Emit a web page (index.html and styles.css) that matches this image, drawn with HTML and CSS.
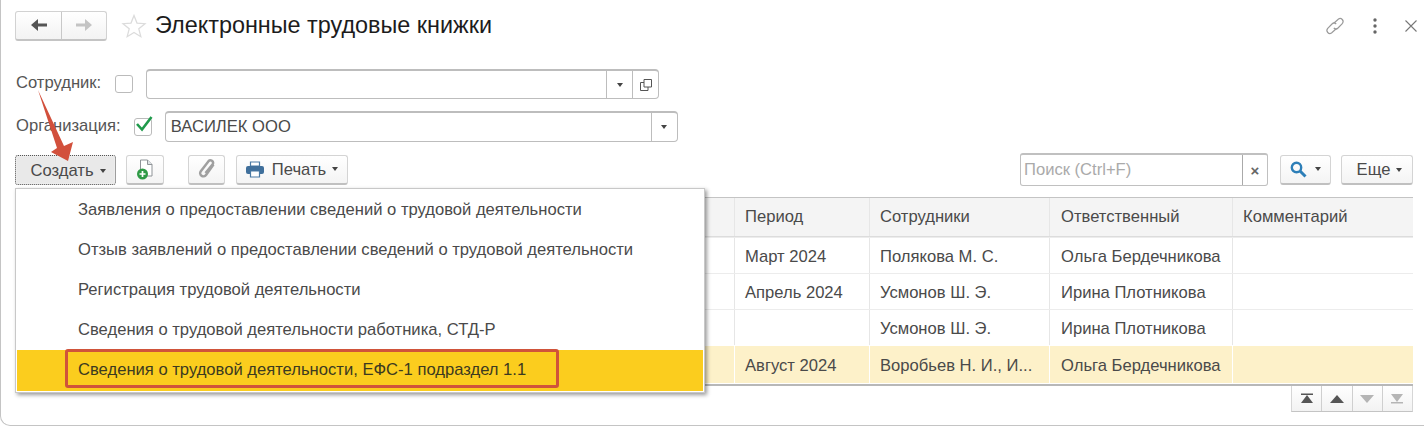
FILE: index.html
```html
<!DOCTYPE html>
<html lang="ru">
<head>
<meta charset="utf-8">
<title>Электронные трудовые книжки</title>
<link rel="stylesheet" href="styles.css">
</head>
<body>
<div class="window">
  <header class="head">
    <div class="nav">
      <span class="nav-btn nav-back"><svg width="18" height="14" viewBox="0 0 18 14"><path d="M17 5.500H8V1L1 7l7 6V8.500h9z" fill="#555"/></svg></span>
      <span class="nav-btn nav-fwd"><svg width="18" height="14" viewBox="0 0 18 14"><path d="M1 5.500h9V1l7 6-7 6V8.500H1z" fill="#c4c4c4"/></svg></span>
    </div>
    <svg class="star" width="26" height="26" viewBox="0 0 26 26"><path d="M13 2.500l3 7.600 8 .6-6.200 5.100 2 7.900L13 19.400 6.200 23.700l2-7.900L2 10.700l8-.6z" fill="#fff" stroke="#dcdcdc" stroke-width="1.300"/></svg>
    <h1 class="title">Электронные трудовые книжки</h1>
    <div class="head-icons">
      <svg width="20" height="22" viewBox="0 0 20 22"><g fill="none" stroke="#9a9a9a" stroke-width="1.200"><path d="M8.500 8.500l5-4.500a3 3 0 0 1 4 4.300l-4.500 4.700a3 3 0 0 1-4.200 0"/><path d="M11.500 13.500l-5 4.500a3 3 0 0 1-4-4.300L7 9a3 3 0 0 1 4.200 0"/></g></svg>
      <svg width="6" height="18" viewBox="0 0 6 18"><circle cx="3" cy="3" r="1.700" fill="#666"/><circle cx="3" cy="9" r="1.700" fill="#666"/><circle cx="3" cy="15" r="1.700" fill="#666"/></svg>
      <svg width="12" height="12" viewBox="0 0 12 12"><path d="M.5.500l11 11M11.500.500l-11 11" stroke="#777" stroke-width="1.100" fill="none"/></svg>
    </div>
  </header>

  <div class="filter filter-emp">
    <span class="label">Сотрудник:</span>
    <span class="check"></span>
    <div class="field field-emp">
      <span class="field-text"></span>
      <span class="field-btn"><i class="caret"></i></span>
      <span class="field-btn"><svg width="12" height="12" viewBox="0 0 12 12"><path d="M4 .500h7.500V8H4zM4 3.500H.500V11.500H8V8" fill="none" stroke="#555" stroke-width="1"/></svg></span>
    </div>
  </div>

  <div class="filter filter-org">
    <span class="label">Организация:</span>
    <span class="check"><svg class="tick" width="20" height="18" viewBox="0 0 20 18"><path d="M3 9l5 5.500L17.500 2" fill="none" stroke="#1f9a4b" stroke-width="2.600"/></svg></span>
    <div class="field field-org">
      <span class="field-text">ВАСИЛЕК ООО</span>
      <span class="field-btn"><i class="caret"></i></span>
    </div>
  </div>

  <div class="toolbar">
    <span class="btn btn-create">Создать<i class="caret"></i></span>
    <span class="btn btn-icon"><svg width="18" height="21" viewBox="0 0 18 21"><path d="M4.500 1h7l4.500 4.500V17H4.500z" fill="#fff" stroke="#8f9498"/><path d="M11.500 1v4.500H16" fill="#dfe3e6" stroke="#8f9498"/><circle cx="6.500" cy="15" r="5.500" fill="#2f9a46"/><path d="M6.500 12v6M3.500 15h6" stroke="#fff" stroke-width="1.700"/></svg></span>
    <span class="btn btn-icon btn-clip"><svg width="20" height="22" viewBox="0 0 20 22"><path d="M16.500 6.500L9 17a3.200 3.200 0 0 1-5.200-3.800l7.700-10a2.600 2.600 0 0 1 4.200 3L8.500 15" fill="none" stroke="#a0a0a0" stroke-width="2.500"/></svg></span>
    <span class="btn btn-print"><svg width="18" height="17" viewBox="0 0 18 17"><path d="M4.500 1h9v4h-9z" fill="#fff" stroke="#4a7aa5" stroke-width="1.200"/><rect y="5" width="18" height="8" rx="2" fill="#3f6f9b"/><path d="M4.500 10h9v6h-9z" fill="#fff" stroke="#4a7aa5" stroke-width="1.200"/></svg><span class="btn-label">Печать</span><i class="caret"></i></span>
    <div class="search">
      <span class="search-text">Поиск (Ctrl+F)</span>
      <span class="search-clear">×</span>
    </div>
    <span class="btn btn-find"><svg width="17" height="17" viewBox="0 0 17 17"><circle cx="6.500" cy="6.500" r="4.700" fill="none" stroke="#2d7fb8" stroke-width="2.400"/><path d="M10 10l5.500 5.500" stroke="#2d7fb8" stroke-width="3"/></svg><i class="caret"></i></span>
    <span class="btn btn-more">Еще<i class="caret"></i></span>
  </div>

  <div class="table-wrap">
    <div class="row row-head">
      <span class="cell c0"></span>
      <span class="cell c1">Период</span>
      <span class="cell c2">Сотрудники</span>
      <span class="cell c3">Ответственный</span>
      <span class="cell c4">Комментарий</span>
    </div>
    <div class="row">
      <span class="cell c0"></span>
      <span class="cell c1">Март 2024</span>
      <span class="cell c2">Полякова М. С.</span>
      <span class="cell c3">Ольга Бердечникова</span>
      <span class="cell c4"></span>
    </div>
    <div class="row">
      <span class="cell c0"></span>
      <span class="cell c1">Апрель 2024</span>
      <span class="cell c2">Усмонов Ш. Э.</span>
      <span class="cell c3">Ирина Плотникова</span>
      <span class="cell c4"></span>
    </div>
    <div class="row">
      <span class="cell c0"></span>
      <span class="cell c1"></span>
      <span class="cell c2">Усмонов Ш. Э.</span>
      <span class="cell c3">Ирина Плотникова</span>
      <span class="cell c4"></span>
    </div>
    <div class="row row-current">
      <span class="cell c0"></span>
      <span class="cell c1">Август 2024</span>
      <span class="cell c2">Воробьев Н. И., И...</span>
      <span class="cell c3">Ольга Бердечникова</span>
      <span class="cell c4"></span>
    </div>
  </div>

  <div class="pager">
    <span class="page-btn"><svg width="14" height="11" viewBox="0 0 14 11"><path d="M1 .500h12v1.500H1zM7 2l6 8H1z" fill="#555"/></svg></span>
    <span class="page-btn"><svg width="14" height="8" viewBox="0 0 14 8"><path d="M7 0l7 8H0z" fill="#555"/></svg></span>
    <span class="page-btn"><svg width="14" height="8" viewBox="0 0 14 8"><path d="M7 8l7-8H0z" fill="#b5b5b5"/></svg></span>
    <span class="page-btn"><svg width="14" height="11" viewBox="0 0 14 11"><path d="M1 9h12v1.500H1zM7 9l6-8H1z" fill="#b5b5b5"/></svg></span>
  </div>

  <div class="menu">
    <div class="menu-item">Заявления о предоставлении сведений о трудовой деятельности</div>
    <div class="menu-item">Отзыв заявлений о предоставлении сведений о трудовой деятельности</div>
    <div class="menu-item">Регистрация трудовой деятельности</div>
    <div class="menu-item">Сведения о трудовой деятельности работника, СТД-Р</div>
    <div class="menu-item menu-active">Сведения о трудовой деятельности, ЕФС-1 подраздел 1.1</div>
  </div>
  <div class="callout"></div>
  <svg class="arrow" width="50" height="80" viewBox="0 0 50 80"><path d="M1 1L27 57l9-4-5 19-17-9 6-4z" fill="#d2503c"/></svg>
</div>
</body>
</html>
```

FILE: styles.css
```css
* { box-sizing: border-box; }
html, body { margin: 0; height: 100%; background: #fff; overflow: hidden; }
body { font-family: "Liberation Sans", Arial, sans-serif; color: #4a4a4a; font-size: 16.600px; }

.window {
  position: relative;
  width: 1424px;
  height: 426px;
  padding: 11px 11px 0 14px;
  border-left: 1px solid #c4c4c4;
  border-bottom: 1px solid #c4c4c4;
  border-bottom-left-radius: 10px;
}

.head { display: flex; align-items: center; height: 29px; }
.nav { display: flex; width: 92px; height: 30px; border: 1px solid #d2d2d2; border-bottom: 2px solid #c4c4c4; border-radius: 3px; background: linear-gradient(#fff, #f3f3f3); }
.nav-btn { display: flex; align-items: center; justify-content: center; height: 100%; }
.nav-back { width: 46px; border-right: 1px solid #c8c8c8; }
.nav-fwd { flex: 1; }
.star { margin-left: 14px; }
.title { margin: 0 0 0 8px; font-size: 23.400px; font-weight: 400; color: #1c1c1c; white-space: nowrap; }
.head-icons { margin-left: auto; margin-right: -4px; display: flex; align-items: center; gap: 27px; }

.filter { display: flex; align-items: center; }
.filter-emp { margin-top: 29px; height: 30px; }
.filter-org { margin-top: 12px; height: 31px; }
.label { color: #555; white-space: nowrap; padding: 0 0 2px 1px; }
.check { flex: none; display: block; position: relative; width: 18px; height: 18px; border: 1px solid #bbb; border-radius: 3px; background: #fff; margin-left: 14px; }
.filter-org .check { margin-left: 13px; }
.tick { position: absolute; left: -1px; top: -4px; }
.field { display: flex; width: 513px; height: 100%; border: 1px solid #bdbdbd; border-top-width: 2px; border-radius: 4px; background: #fff; }
.field-emp { margin-left: 13px; }
.field-org { margin-left: 13px; }
.field-text { flex: 1; padding: 0 0 0 5px; line-height: 27px; color: #4a4a4a; }
.field-btn { flex: none; width: 26px; display: flex; align-items: center; justify-content: center; border-left: 1px solid #bdbdbd; }
.caret { display: inline-block; width: 0; height: 0; border: 3.500px solid transparent; border-top: 4px solid #444; border-bottom: 0; }

.toolbar { display: flex; align-items: center; height: 31px; margin-top: 12px; }
.btn { flex: none; display: flex; align-items: center; justify-content: center; height: 30px; padding-top: 2px; border: 1px solid #d4d4d4; border-bottom: 2px solid #c0c0c0; border-radius: 3px; background: linear-gradient(#fff, #f4f4f4); color: #4a4a4a; white-space: nowrap; }
.btn .caret { margin-left: 6px; }
.btn-create { width: 101px; padding-left: 5px; border: 1px dotted #555; background: #e9e9e9; box-shadow: inset 0 0 0 1px #ededed; }
.btn-icon { width: 38px; margin-left: 10px; padding-top: 0; }
.btn-clip { width: 37px; margin-left: 24px; }
.btn-print { width: 112px; margin-left: 11px; padding-top: 0; }
.btn-label { padding-top: 2px; }
.btn-print svg { margin-right: 8px; }
.search { display: flex; width: 248px; height: 33px; margin-left: auto; border: 1px solid #c0c0c0; border-top-width: 2px; border-radius: 3px; }
.search-text { flex: 1; padding-left: 3px; line-height: 29px; color: #aaa; }
.search-clear { width: 25px; display: flex; align-items: center; justify-content: center; border-left: 1px solid #aaa; color: #666; font-weight: 700; font-size: 15px; }
.btn-find { width: 51px; margin-left: 12px; padding-top: 0; }
.btn-find .caret { margin-left: 8px; }
.btn-more { width: 72px; margin-left: 10px; padding-left: 5px; }

.table-wrap { margin-top: 12px; width: 1398px; height: 189px; border-top: 1px solid #c4c4c4; border-bottom: 2px solid #b8b8b8; }
.row { display: flex; height: 36px; border-top: 1px solid #ececec; }
.row-head { height: 39px; border-top: 0; background: #f4f4f4; border-bottom: 1px solid #dcdcdc; }
.row-current { height: 37px; margin-top: 1px; background: #fdf1c9; border-top: 0; }
.cell { display: flex; align-items: center; padding: 2px 0 0 10px; white-space: nowrap; border-right: 1px solid #e6e6e6; overflow: hidden; }
.row-head .cell { padding-top: 0; }
.row-current .cell { border-right-color: #fff; }
.c0 { width: 720px; }
.c1 { width: 135px; }
.c2 { width: 180px; }
.c3 { width: 183px; padding-left: 11px; }
.c4 { flex: 1; border-right: 0; }

.pager { display: flex; width: 122px; height: 26px; margin-left: 1276px; border: 1px solid #d6d6d6; border-top: 0; border-bottom-color: #c4c4c4; background: linear-gradient(#fff, #f2f2f2); }
.page-btn { flex: 1; display: flex; align-items: center; justify-content: center; border-right: 1px solid #cfcfcf; }
.page-btn:last-child { border-right: 0; }

.menu { position: absolute; left: 14px; top: 188px; width: 690px; height: 205px; padding: 1px; border: 1px solid #c8c8c8; background: #fff; box-shadow: 2px 2px 4px rgba(0, 0, 0, .4); }
.menu-item { height: 40px; padding-left: 61px; line-height: 39px; white-space: nowrap; color: #4a4a4a; }
.menu-active { height: 41px; background: #fbcd1e; color: #3c3a20; }
.callout { position: absolute; left: 64px; top: 349px; width: 494px; height: 39px; border: 3px solid #d0533a; border-radius: 3px; }
.arrow { position: absolute; left: 36px; top: 89px; }
```
